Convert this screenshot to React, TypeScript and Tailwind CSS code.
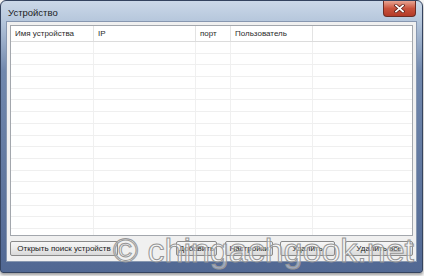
const columns = [
  { title: 'Имя устройства', width: 'w-[83px]' },
  { title: 'IP', width: 'w-[102px]' },
  { title: 'порт', width: 'w-[35px]' },
  { title: 'Пользователь', width: 'w-[82px]' },
  { title: '', width: 'flex-1' },
];

const rows = Array.from({ length: 17 });

function CloseButton() {
  return (
    <div className="mr-[6px] flex h-[16px] w-[33px] items-center justify-center self-start rounded-b-[4px] border border-t-0 border-[#6b2c24] bg-gradient-to-b from-[#e7a493] via-[#c9523c] to-[#b33a28]">
      <svg width="11" height="9" viewBox="0 0 11 9">
        <path d="M2 1.5 L9 7.5 M9 1.5 L2 7.5" stroke="#5a1f18" strokeWidth="3.2" strokeLinecap="square" />
        <path d="M2 1.5 L9 7.5 M9 1.5 L2 7.5" stroke="#ffffff" strokeWidth="1.7" strokeLinecap="square" />
      </svg>
    </div>
  );
}

function Button({ label, className }: { label: string; className: string }) {
  return (
    <div
      className={`flex h-[15px] items-center justify-center rounded-[2px] border border-[#8a8a8a] bg-gradient-to-b from-[#f6f6f6] via-[#ebebeb] to-[#d9d9d9] text-[8px] text-[#1a1a1a] ${className}`}
    >
      {label}
    </div>
  );
}

export default function App() {
  return (
    <div className="relative h-[276px] w-[424px] overflow-hidden bg-[#f4f4f4] font-['Liberation_Sans',Arial,sans-serif]">
      <div className="flex h-[273px] w-[423px] flex-col rounded-t-[6px] rounded-b-[3px] border border-[#34435f] bg-[linear-gradient(to_bottom,#cbd8e8_0px,#b6c7dc_20px,#7188ad_70px,#516893_100%)] shadow-[0_2px_3px_rgba(0,0,0,0.35)]">
        {/* title bar */}
        <div className="flex h-[20px] items-start justify-between">
          <span className="ml-[7px] mt-[7px] text-[9.5px] leading-none text-[#1c1c1c]">Устройство</span>
          <CloseButton />
        </div>

        {/* client area */}
        <div className="mx-[5px] flex h-[241px] flex-col border border-[#8797b0] bg-[#f0f0f0] px-[3px] pt-[3px]">
          <div className="flex h-[211px] flex-col overflow-hidden border border-[#a3a7ad] bg-white">
            <div className="flex h-[16px] shrink-0 border-b border-[#dcdcdc] text-[8px] text-[#2a2a2a]">
              {columns.map((c, i) => (
                <div
                  key={i}
                  className={`flex items-center border-r border-[#e3e3e3] pl-[4px] ${c.width} ${i === 4 ? 'border-r-0' : ''}`}
                >
                  {c.title}
                </div>
              ))}
            </div>
            {rows.map((_, r) => (
              <div key={r} className="flex h-[11.7px] shrink-0 border-b border-[#efefef]">
                {columns.map((c, i) => (
                  <div key={i} className={`border-r border-[#f0f0f0] ${c.width} ${i === 4 ? 'border-r-0' : ''}`} />
                ))}
              </div>
            ))}
          </div>

          <div className="mt-[5px] flex">
            <Button label="Открыть поиск устройств" className="w-[108px]" />
            <Button label="Добавить" className="ml-[58px] w-[41px]" />
            <Button label="Настройки" className="ml-[8px] w-[48px]" />
            <Button label="Удалить" className="ml-[7px] w-[55px]" />
            <Button label="Удалить все" className="ml-[10px] w-[68px]" />
          </div>
        </div>
      </div>

      {/* watermark */}
      <div className="pointer-events-none absolute left-[113px] top-[233px] whitespace-nowrap text-[34px] leading-none text-[rgba(255,255,255,0.45)] [-webkit-text-stroke:1px_#969696]">
        © chingachgook.net
      </div>
    </div>
  );
}
